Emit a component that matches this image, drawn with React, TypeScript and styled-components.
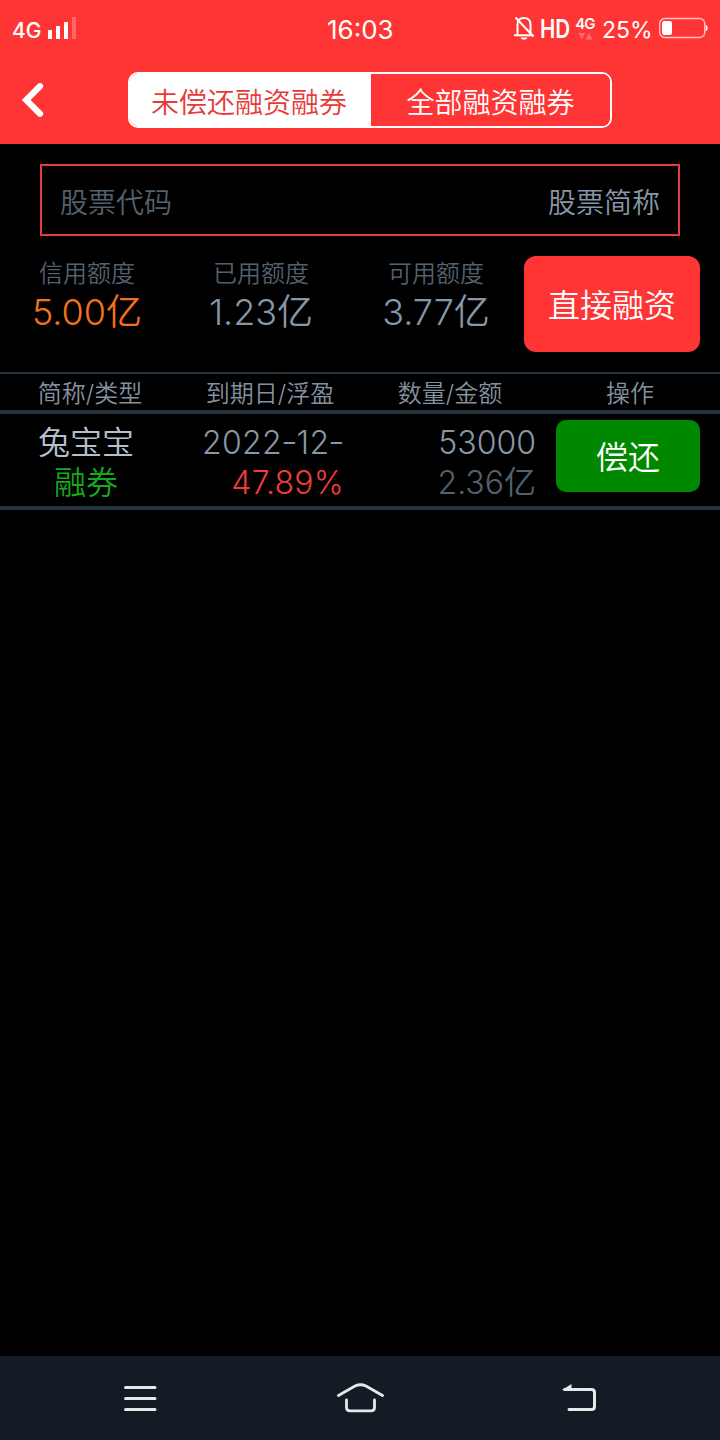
import React from "react";
import styled, { createGlobalStyle } from "styled-components";

const GlobalStyle = createGlobalStyle`
  * { box-sizing: border-box; }
  html, body { margin: 0; padding: 0; background: #000; }
  body {
    font-family: Inter, "Noto Sans CJK SC", sans-serif;
    font-weight: 350;
  }
  button { font: inherit; border: 0; padding: 0; margin: 0; }
`;

const Screen = styled.div`
  width: 720px;
  height: 1440px;
  display: flex;
  flex-direction: column;
  background: #000;
  overflow: hidden;
  white-space: nowrap;
`;

const StatusBar = styled.div`
  flex: none;
  height: 56px;
  padding: 0 12px;
  display: grid;
  grid-template-columns: 1fr auto 1fr;
  align-items: center;
  background: #ff3434;
  color: #fff;
`;

const StatusLeft = styled.div`
  display: flex;
  align-items: center;
  height: 56px;
  gap: 7px;
`;

const StatusRight = styled.div`
  display: flex;
  align-items: center;
  justify-content: flex-end;
  height: 56px;
`;

const StatusText = styled.span<{ $size: number; $weight?: number; $width: number; $top?: number }>`
  flex: none;
  width: ${(p) => p.$width}px;
  font-size: ${(p) => p.$size}px;
  font-weight: ${(p) => p.$weight ?? 400};
  line-height: 30px;
  padding-top: ${(p) => p.$top ?? 4}px;
`;

const HdText = styled(StatusText)`
  margin-left: 5px;
  transform: scaleX(0.79);
  transform-origin: left center;
`;

const NetworkBadge = styled.div`
  width: 20px;
  margin-right: 7px;
  display: flex;
  flex-direction: column;
  align-items: center;
  font-size: 15px;
  font-weight: 600;
  line-height: 16px;
  letter-spacing: -0.8px;
`;

const TitleBar = styled.header`
  flex: none;
  height: 88px;
  display: flex;
  align-items: center;
  background: #ff3434;
`;

const BackButton = styled.button`
  width: 128px;
  height: 88px;
  padding-left: 20px;
  display: flex;
  align-items: center;
  background: transparent;
`;

const Tabs = styled.div`
  width: 484px;
  height: 56px;
  display: flex;
  border: 2px solid #fff;
  border-radius: 10px;
  overflow: hidden;
`;

const Tab = styled.button<{ $active?: boolean }>`
  flex: ${(p) => (p.$active ? "0 0 241px" : "1")};
  height: 52px;
  font-size: 28px;
  line-height: 48px;
  padding: 5px ${(p) => (p.$active ? 3 : 0)}px 0 0;
  color: ${(p) => (p.$active ? "#e83a3a" : "#fff")};
  background: ${(p) => (p.$active ? "#fff" : "#ff3434")};
`;

const SearchBox = styled.div`
  flex: none;
  height: 72px;
  margin: 20px 40px;
  padding: 6px 18px 0;
  display: flex;
  align-items: center;
  justify-content: space-between;
  border: 2px solid #e33c3e;
  font-size: 28px;
  line-height: 62px;
  color: #8797a6;
`;

const Placeholder = styled.span`
  color: #53616f;
`;

const Summary = styled.section`
  flex: none;
  height: 116px;
  padding-right: 20px;
  display: flex;
  align-items: flex-start;
`;

const Stats = styled.div`
  width: 524px;
  padding-top: 1px;
  display: grid;
  grid-template-columns: 174px 174px 176px;
`;

const Stat = styled.div`
  display: flex;
  flex-direction: column;
  align-items: center;
`;

const StatLabel = styled.div`
  font-size: 24px;
  line-height: 34px;
  color: #53616f;
`;

const StatValue = styled.div<{ $accent?: boolean }>`
  font-size: 36px;
  line-height: 42px;
  color: ${(p) => (p.$accent ? "#f57118" : "#8797a8")};
`;

const ActionButton = styled.button<{ $tone: "buy" | "repay" }>`
  width: ${(p) => (p.$tone === "buy" ? 176 : 144)}px;
  height: ${(p) => (p.$tone === "buy" ? 96 : 72)}px;
  padding-bottom: 2px;
  border-radius: ${(p) => (p.$tone === "buy" ? 12 : 10)}px;
  background: ${(p) => (p.$tone === "buy" ? "#ff3434" : "#008800")};
  font-size: 32px;
  color: #fff;
`;

const TableHead = styled.div`
  flex: none;
  height: 42px;
  display: grid;
  grid-template-columns: repeat(4, 1fr);
  border-top: 2px solid #22323f;
  border-bottom: 4px solid #22323f;
  font-size: 24px;
  line-height: 39px;
  text-align: center;
  color: #8492a0;
`;

const TableRow = styled.div`
  flex: none;
  height: 96px;
  padding-right: 20px;
  display: grid;
  grid-template-columns: 172px 172px 192px 144px;
  border-bottom: 4px solid #22323f;
`;

const Cell = styled.div<{ $align: "center" | "right"; $spacing?: number }>`
  padding-top: 9px;
  text-align: ${(p) => p.$align};
  font-size: 32px;
  line-height: 40px;
  letter-spacing: ${(p) => p.$spacing ?? 0}px;
`;

const ActionCell = styled.div`
  padding: 6px 0 0 20px;
  width: 164px;
`;

const Line = styled.div<{ $color: string }>`
  height: 40px;
  color: ${(p) => p.$color};
`;

const RaisedHyphen = styled.span`
  display: inline-block;
  transform: translateY(-1px) scaleX(1.15);
`;

const Empty = styled.main`
  flex: 1;
`;

const NavBar = styled.nav`
  flex: none;
  height: 84px;
  padding: 0 30px;
  display: grid;
  grid-template-columns: repeat(3, 1fr);
  justify-items: center;
  align-items: center;
  background: #141b25;
`;

const stats = [
  { label: "信用额度", value: "5.00亿", accent: true },
  { label: "已用额度", value: "1.23亿" },
  { label: "可用额度", value: "3.77亿" },
];

const columns = ["简称/类型", "到期日/浮盈", "数量/金额", "操作"];

const SignalIcon = () => (
  <svg width="30" height="26" viewBox="0 0 30 26" fill="#fff">
    <rect x="0" y="15" width="4" height="9" rx="0.5" />
    <rect x="8" y="11" width="4" height="13" rx="0.5" />
    <rect x="16" y="7" width="4" height="17" rx="0.5" />
    <rect x="24" y="2" width="4" height="22" opacity="0.25" />
  </svg>
);

const MutedBellIcon = () => (
  <svg width="22" height="26" viewBox="0 0 22 26" fill="none" stroke="#fff" strokeWidth="2">
    <path d="M4.500 20V9.500C4.500 5.500 7 3 11 3S17.500 5.500 17.500 9.500V20" />
    <path d="M1 20.300H20.500" />
    <path d="M2.500 2.500L20.500 21.500" />
    <path d="M7.500 22.500H14.500C13.500 25.500 8.500 25.500 7.500 22.500Z" fill="#fff" stroke="none" />
  </svg>
);

const DataArrows = () => (
  <svg width="15" height="8" viewBox="0 0 15 8" fill="#ff7171">
    <path d="M0.500 1H7L3.800 7.500ZM7.800 7.500H14.300L11 1Z" />
  </svg>
);

const BatteryIcon = () => (
  <svg width="50" height="22" viewBox="0 0 50 22">
    <rect x="1.700" y="1.500" width="45" height="19" rx="5" fill="none" stroke="#ffc4c4" strokeWidth="1.300" />
    <rect x="4" y="4" width="10" height="14" rx="2" fill="#fff" />
    <path d="M47.700 7.500Q49.700 8 49.700 11T47.700 14.500Z" fill="#fff" />
  </svg>
);

const BackIcon = () => (
  <svg width="26" height="36" viewBox="0 0 26 36" fill="none" stroke="#fff" strokeWidth="6.200" strokeLinecap="round" strokeLinejoin="miter">
    <path d="M20 4.200L6.200 18L20 31.800" />
  </svg>
);

const MenuIcon = () => (
  <svg width="34" height="28" viewBox="0 0 34 28" stroke="#e6e8ea" strokeWidth="3" strokeLinecap="round">
    <path d="M2.500 3.500H32M2.500 14.500H32M2.500 25.500H32" />
  </svg>
);

const HomeIcon = () => (
  <svg width="48" height="32" viewBox="0 0 48 32" fill="none" stroke="#e6e8ea" strokeWidth="2.800" strokeLinecap="round">
    <path d="M2.500 13.500L19 4Q24.500 1.500 30 4L46.500 13.500" />
    <path d="M10.500 18V25.500Q10.500 28.800 14 28.800H35Q38.500 28.800 38.500 25.500V18" />
  </svg>
);

const ReturnIcon = () => (
  <svg width="36" height="30" viewBox="0 0 36 30" fill="none" stroke="#e6e8ea" strokeWidth="3" strokeLinecap="round">
    <path d="M2.500 6.500H29.500Q32.500 6.500 32.500 9.500V23.500Q32.500 26.500 29.500 26.500H7" />
    <path d="M0 7L9.500 1V7Z" fill="#e6e8ea" stroke="none" />
  </svg>
);

export default function App() {
  return (
    <>
      <GlobalStyle />
      <Screen>
        <StatusBar>
          <StatusLeft>
            <StatusText $size={21} $weight={500} $width={29} $top={6}>4G</StatusText>
            <SignalIcon />
          </StatusLeft>
          <StatusText $size={26} $width={66} $top={4}>16:03</StatusText>
          <StatusRight>
            <MutedBellIcon />
            <HdText $size={26} $weight={600} $width={35} $top={1}>HD</HdText>
            <NetworkBadge>
              4G
              <DataArrows />
            </NetworkBadge>
            <StatusText $size={23} $width={56} $top={3}>25%</StatusText>
            <BatteryIcon />
          </StatusRight>
        </StatusBar>
        <TitleBar>
          <BackButton aria-label="返回">
            <BackIcon />
          </BackButton>
          <Tabs>
            <Tab $active>未偿还融资融券</Tab>
            <Tab>全部融资融券</Tab>
          </Tabs>
        </TitleBar>
        <SearchBox>
          <Placeholder>股票代码</Placeholder>
          <span>股票简称</span>
        </SearchBox>
        <Summary>
          <Stats>
            {stats.map((s) => (
              <Stat key={s.label}>
                <StatLabel>{s.label}</StatLabel>
                <StatValue $accent={s.accent}>{s.value}</StatValue>
              </Stat>
            ))}
          </Stats>
          <ActionButton $tone="buy">直接融资</ActionButton>
        </Summary>
        <TableHead>
          {columns.map((c) => (
            <div key={c}>{c}</div>
          ))}
        </TableHead>
        <TableRow>
          <Cell $align="center">
            <Line $color="#b4c0ce">兔宝宝</Line>
            <Line $color="#17a81c">融券</Line>
          </Cell>
          <Cell $align="right" $spacing={0.25}>
            <Line $color="#8797a8">
              2022<RaisedHyphen>-</RaisedHyphen>12<RaisedHyphen>-</RaisedHyphen>
            </Line>
            <Line $color="#ee3c3c">47.89%</Line>
          </Cell>
          <Cell $align="right">
            <Line $color="#8797a8">53000</Line>
            <Line $color="#53616f">2.36亿</Line>
          </Cell>
          <ActionCell>
            <ActionButton $tone="repay">偿还</ActionButton>
          </ActionCell>
        </TableRow>
        <Empty />
        <NavBar>
          <MenuIcon />
          <HomeIcon />
          <ReturnIcon />
        </NavBar>
      </Screen>
    </>
  );
}
